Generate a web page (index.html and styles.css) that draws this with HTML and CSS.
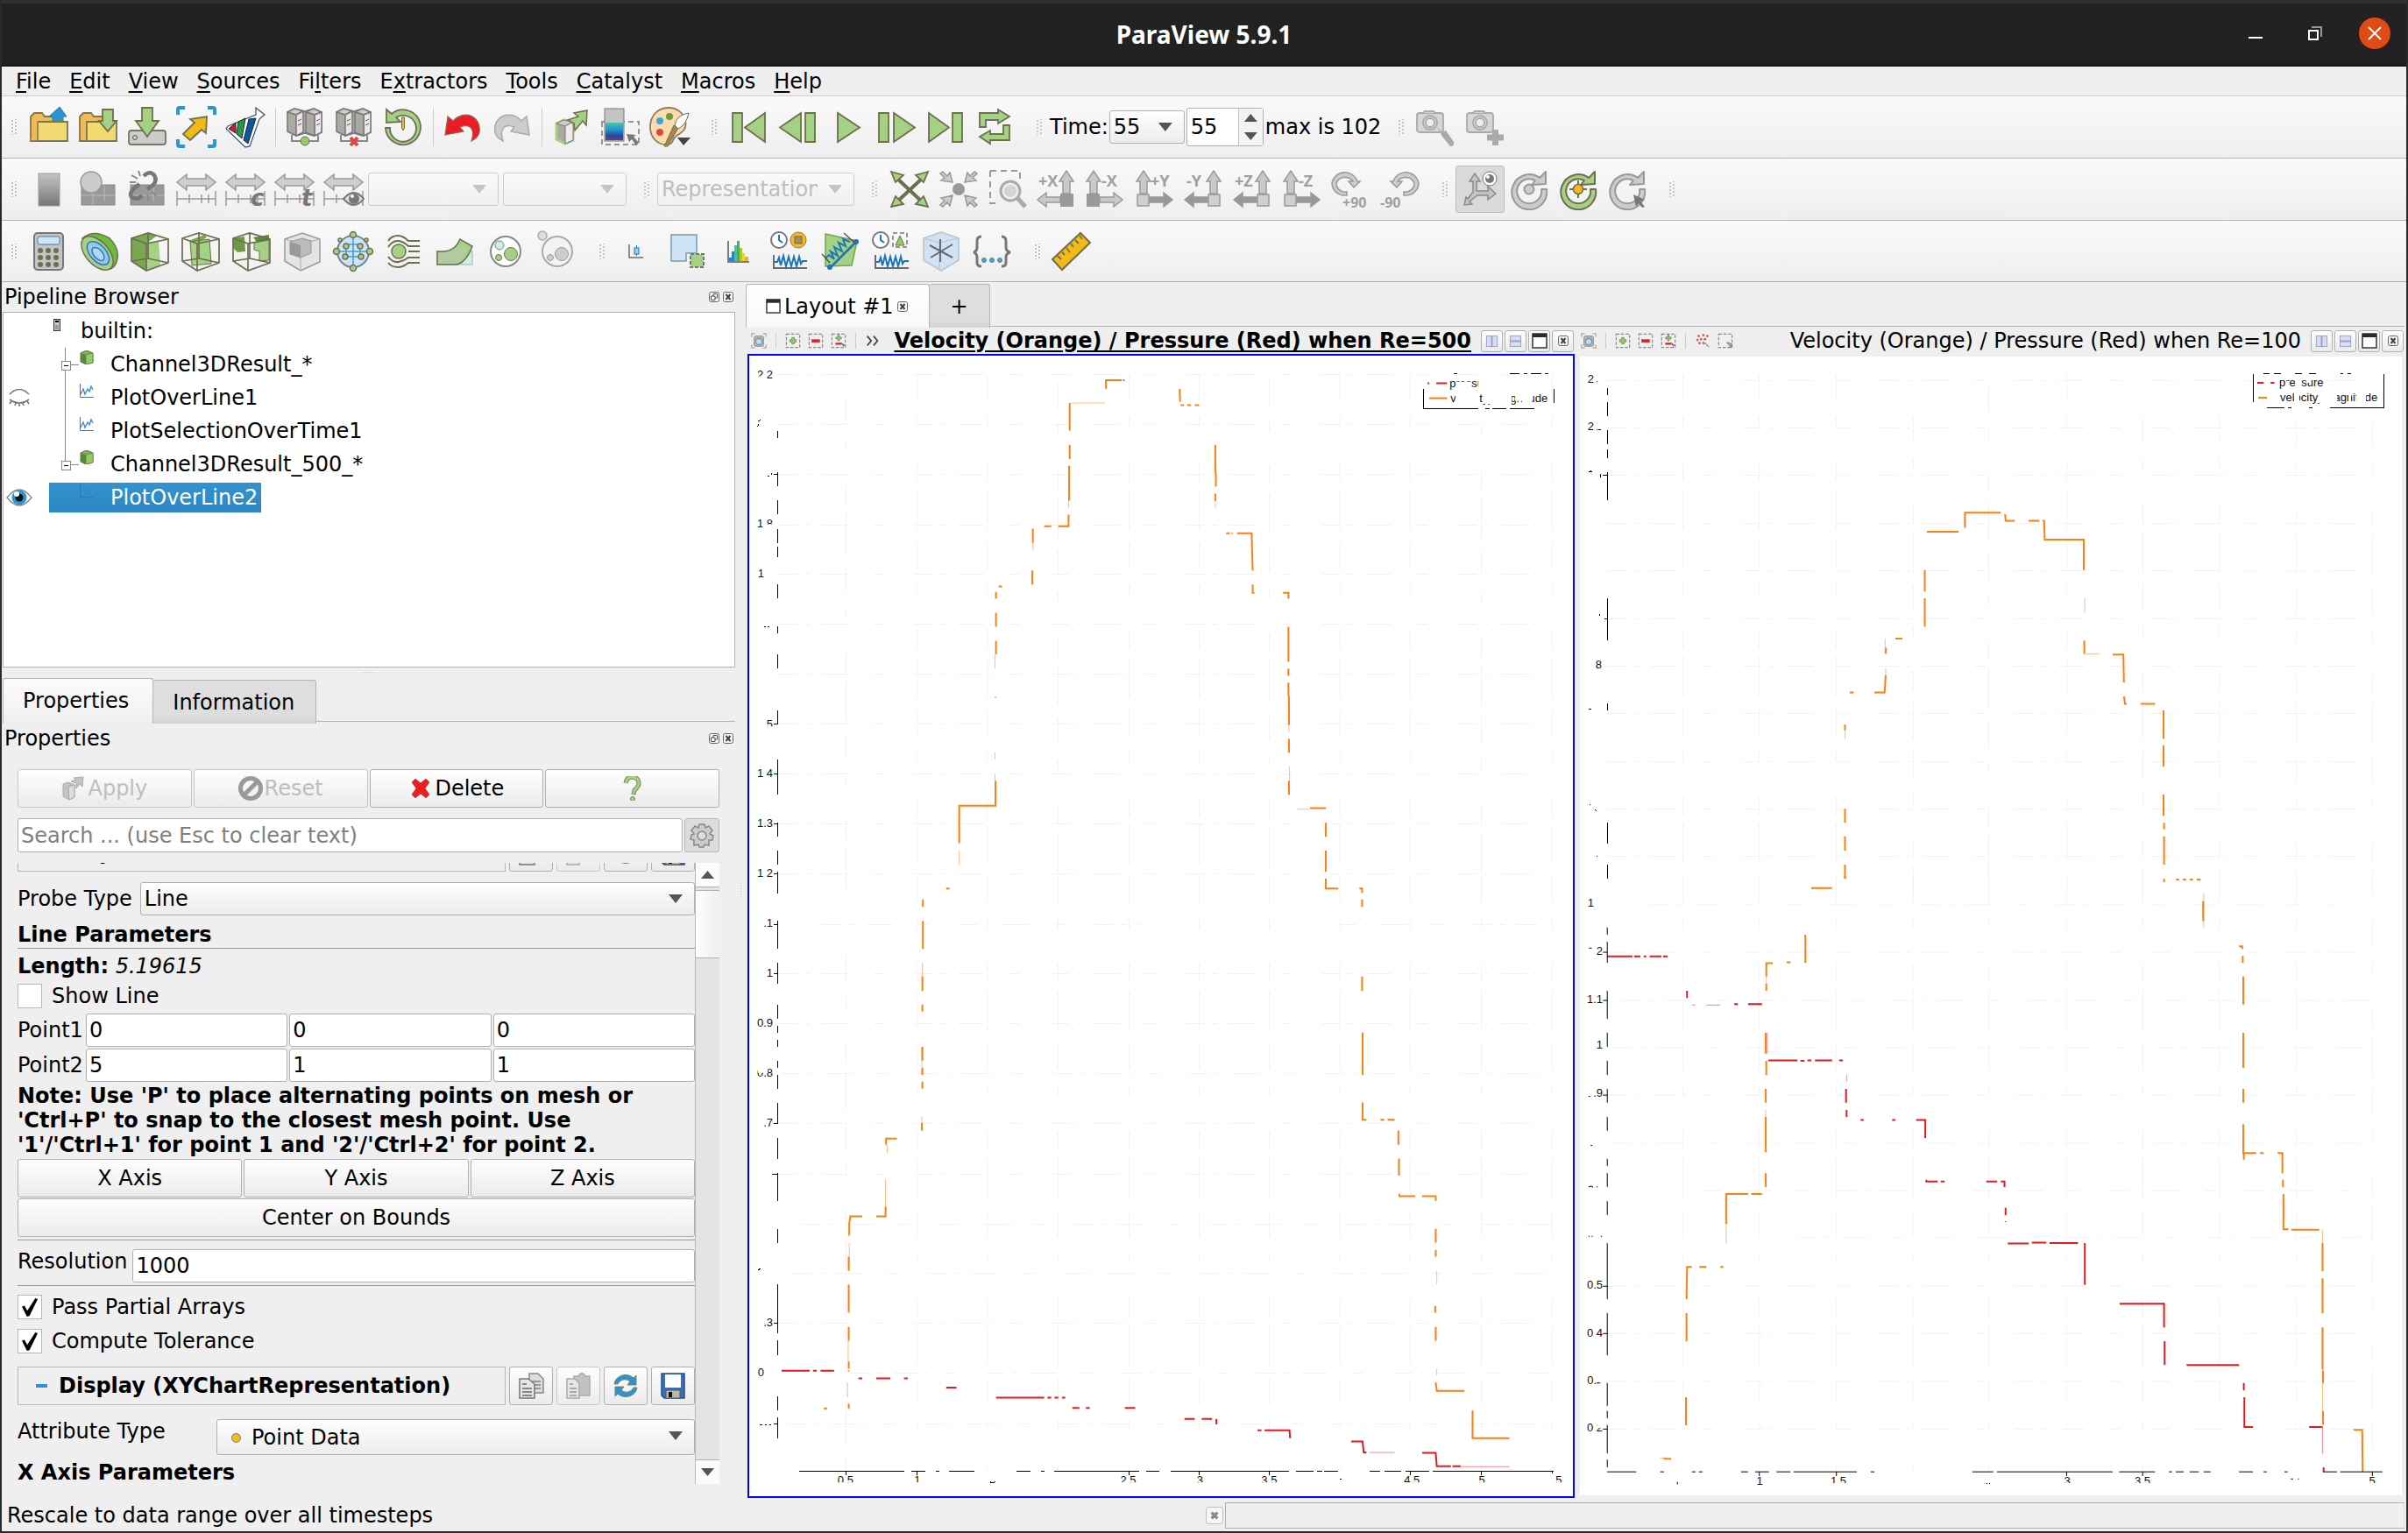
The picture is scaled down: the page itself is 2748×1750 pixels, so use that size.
FILE: index.html
```html
<!DOCTYPE html>
<html lang="en">
<head>
<meta charset="utf-8">
<title>ParaView 5.9.1</title>
<link rel="stylesheet" href="styles.css">
</head>
<body>
<svg class="defs" aria-hidden="true">
  <symbol id="i-float" viewBox="0 0 12 12"><rect x=".5" y=".5" width="11" height="11" rx="2" fill="#f6f6f6" stroke="#666"/><path d="M5 5V2.5H9.500V7H7M2.500 5H7V9.500H2.500Z" fill="none" stroke="#555"/></symbol>
  <symbol id="i-close" viewBox="0 0 12 12"><rect x=".5" y=".5" width="11" height="11" rx="2" fill="#f6f6f6" stroke="#666"/><path d="M3.500 3L8.500 9M8.500 3L3.500 9" stroke="#444" stroke-width="2"/></symbol>
  <symbol id="i-cam" viewBox="0 0 20 20"><path d="M1 5V1H5M15 1H19V5M19 15V19H15M5 19H1V15" fill="none" stroke="#aaa" stroke-width="1.500"/><rect x="4" y="4" width="12" height="13" rx="2" fill="#b4b4b4" stroke="#8a8a8a"/><circle cx="10" cy="11" r="4" fill="#b9dcf5" stroke="#6f8fa5" stroke-width="1.300"/></symbol>
  <symbol id="i-selplus" viewBox="0 0 20 20"><rect x="1.500" y="1.500" width="17" height="17" fill="none" stroke="#8a8a8a" stroke-width="1.300" stroke-dasharray="4 2"/><path d="M8.500 6h3v2.500h2.500v3h-2.500v2.500h-3v-2.500h-2.500v-3h2.500z" fill="#8fce62" stroke="#7a8a65"/></symbol>
  <symbol id="i-selminus" viewBox="0 0 20 20"><rect x="1.500" y="1.500" width="17" height="17" fill="none" stroke="#8a8a8a" stroke-width="1.300" stroke-dasharray="4 2"/><rect x="5" y="8.500" width="10" height="3.500" fill="#ed1c24" stroke="#a33" stroke-width=".5"/></symbol>
  <symbol id="i-seltog" viewBox="0 0 20 20"><rect x="1.500" y="1.500" width="17" height="17" fill="none" stroke="#8a8a8a" stroke-width="1.300" stroke-dasharray="4 2"/><path d="M9 3h2v2.500h2.500v2h-2.500v2.500h-2v-2.500h-2.500v-2h2.500z" fill="#8fce62" stroke="#7a8a65"/><rect x="6" y="12.500" width="8" height="2.500" fill="#ed1c24"/><path d="M13 12l6 4-3 .5 1 3z" fill="#666"/></symbol>
  <symbol id="i-selpts" viewBox="0 0 20 20"><g fill="#c0614d"><circle cx="5" cy="4" r="1.500"/><circle cx="11" cy="3" r="1.500"/><circle cx="3.500" cy="9" r="1.500"/><circle cx="8" cy="8" r="1.500"/><circle cx="13" cy="8" r="1.500"/><circle cx="6" cy="13" r="1.500"/><circle cx="11" cy="13" r="1.500"/><circle cx="16" cy="4" r="1.500"/></g><path d="M13 13l5 5" stroke="#888" stroke-width="2" stroke-dasharray="2 1"/></symbol>
  <symbol id="i-selbox" viewBox="0 0 20 20"><rect x="1.500" y="1.500" width="17" height="17" fill="none" stroke="#8a8a8a" stroke-width="1.300" stroke-dasharray="4 2"/><path d="M12 12l6 2-1 5z" fill="#8fce62" stroke="#777"/></symbol>
  <symbol id="i-splith" viewBox="0 0 16 16"><rect x="1.500" y="1.500" width="13" height="13" fill="#d6ddf5" stroke="#98a2c0"/><path d="M8 1V15" stroke="#98a2c0" stroke-width="2"/></symbol>
  <symbol id="i-splitv" viewBox="0 0 16 16"><rect x="1.500" y="1.500" width="13" height="13" fill="#d6ddf5" stroke="#98a2c0"/><path d="M1 8H15" stroke="#98a2c0" stroke-width="2"/></symbol>
  <symbol id="i-max" viewBox="0 0 18 18"><rect x="1" y="1" width="16" height="16" fill="#fff" stroke="#333" stroke-width="1.500"/><path d="M1 1H17V5H1Z" fill="#2b2b2b"/></symbol>
  <symbol id="i-cube" viewBox="0 0 16 16"><path d="M1 3L8 0L15 3V14L7 16L1 13Z" fill="#7cb356" stroke="#6a6a4a"/><path d="M1 3L7 5V16L1 13Z" fill="#5a8a3c"/><path d="M7 5L15 3V14L7 16Z" fill="#8fce62" stroke="#6a6a4a" stroke-width=".6"/></symbol>
  <symbol id="i-plot" viewBox="0 0 16 16"><path d="M.5 0V15.500H16" fill="none" stroke="#6b6b5a"/><path d="M1 12L4 6L6 12L9 6L11 9L13 3L15 7" fill="none" stroke="#3a86cc" stroke-width="1.300"/></symbol>
  <symbol id="i-servers" viewBox="0 0 48 48"><g stroke="#77777a" stroke-width="1.500" stroke-linejoin="round"><path d="M4 7L12 3L24 6L34 3L43 7V30L34 34L24 31L14 34L4 29Z" fill="#aaaaa0"/><path d="M4 7L12 3L22 6L14 10Z" fill="#ccc"/><path d="M14 10L22 6V30L14 34Z" fill="#e9e2e6"/><path d="M25 7L34 3L43 7L35 10Z" fill="#ccc"/><path d="M35 10L43 7V30L35 34Z" fill="#f1e8ec"/><path d="M25 7L35 10V34L25 30Z" fill="#aaaaa0"/></g><path d="M16 17l4-2M16 22l4-2M37 17l4-2M37 22l4-2" stroke="#555"/><path d="M9 33V40H39V33" fill="none" stroke="#888" stroke-width="2"/></symbol>
  <symbol id="i-range" viewBox="0 0 48 48"><path d="M2 16L13 7V12H35V7L46 16L35 25V20H13V25Z" fill="#cfcfcf" stroke="#999" stroke-width="1.500"/><path d="M2 26V43M46 26V43M2 35H46M16 30V40M30 30V40M38 30V40" stroke="#999" stroke-width="1.500"/></symbol>
  <symbol id="i-up" viewBox="0 0 48 48"><path d="M31 29V15H27L35 3L43 15H39V29Z" fill="#c9c9c9" stroke="#999" stroke-width="1.500"/></symbol>
  <symbol id="i-side" viewBox="0 0 48 48"><path d="M28 33H12V28L2 36L12 44V39H28Z" stroke="#999" stroke-width="1.500"/></symbol>
  <symbol id="i-rot" viewBox="0 0 48 48"><path d="M36 11A20 20 0 1 0 44 24H38A14 14 0 1 1 31 14L27 19L43 18V4Z" stroke-width="2" stroke-linejoin="round"/></symbol>
  <symbol id="i-clock" viewBox="0 0 48 48"><circle cx="13" cy="11" r="9" fill="#fff" stroke="#777" stroke-width="2"/><path d="M13 5V11L17 14" fill="none" stroke="#1b75bb" stroke-width="2"/><path d="M7 28V43H45" fill="none" stroke="#6b6b6b" stroke-width="2"/><path d="M8 36H11L13 31L15 40L18 29L21 41L24 30L27 41L30 30L33 41L36 30L38 38L40 35H45" fill="none" stroke="#1b75bb" stroke-width="2"/></symbol>
  <symbol id="i-wire" viewBox="0 0 48 48"><path d="M3 9L22 3L45 10V37L20 46L3 35ZM3 9L20 15L45 10M20 15V46M22 3V32L3 35M22 32L45 37" fill="none" stroke="#6e6e50" stroke-width="1.700"/></symbol>
  <symbol id="i-page" viewBox="0 0 34 34"><path d="M15 3H25L31 9V25H15Z" fill="#ddd" stroke="#888" stroke-width="1.500"/><path d="M18 12H28M18 16H28M18 20H28" stroke="#999" stroke-width="2"/><path d="M4 9H14L21 15V31H4Z" fill="#e6e6e6" stroke="#777" stroke-width="1.500"/><path d="M7 15H12M7 20H18M7 24H18M7 28H18" stroke="#888" stroke-width="2"/></symbol>
  <symbol id="i-paste" viewBox="0 0 34 34"><path d="M12 6H17Q21 -1 25 6H30V28H12Z" fill="#c2c2c2" stroke="#aaa" stroke-width="1.500"/><path d="M4 9H13L18 14V31H4Z" fill="#e6e6e6" stroke="#aaa" stroke-width="1.500"/><path d="M7 15H11M7 20H15M7 24H15M7 28H15" stroke="#aaa" stroke-width="2"/></symbol>
  <symbol id="i-reload" viewBox="0 0 34 34"><path d="M4 15A13 12 0 0 1 26 8L29 5V16H19L22 12A9 9 0 0 0 8 15Z" fill="#2a95d3" stroke="#8a7d60"/><path d="M30 19A13 12 0 0 1 8 26L5 29V18H15L12 22A9 9 0 0 0 26 19Z" fill="#2a95d3" stroke="#8a7d60"/></symbol>
  <symbol id="i-save" viewBox="0 0 34 34"><path d="M4 3H30V31H7L4 28Z" fill="#3a70b8" stroke="#24508c" stroke-width="1.500"/><rect x="8" y="4" width="18" height="15" fill="#fff"/><rect x="9" y="22" width="16" height="9" fill="#b9b9a8" stroke="#555"/><rect x="12" y="24" width="4" height="6" fill="#111"/></symbol>
</svg>

<div class="app">
<header class="titlebar">
  <h1>ParaView 5.9.1</h1>
  <div class="winbtns">
    <button aria-label="Minimize"><svg viewBox="0 0 16 16"><path d="M0 13H16" stroke="#fff" stroke-width="2"/></svg></button>
    <button aria-label="Restore"><svg viewBox="0 0 16 16"><rect x="1" y="5" width="10" height="10" fill="none" stroke="#fff" stroke-width="2"/><path d="M4 1H15V12" fill="none" stroke="#999" stroke-width="2"/></svg></button>
    <button class="x" aria-label="Close"><svg viewBox="0 0 16 16"><path d="M1 1L15 15M15 1L1 15" stroke="#fff" stroke-width="2"/></svg></button>
  </div>
</header>

<nav class="menubar">
  <a href="#"><u>F</u>ile</a><a href="#"><u>E</u>dit</a><a href="#"><u>V</u>iew</a><a href="#"><u>S</u>ources</a><a href="#">Fi<u>l</u>ters</a><a href="#">E<u>x</u>tractors</a><a href="#"><u>T</u>ools</a><a href="#"><u>C</u>atalyst</a><a href="#"><u>M</u>acros</a><a href="#"><u>H</u>elp</a>
</nav>

<div class="toolbar">
  <div class="group"><i class="grip"></i>
    <button aria-label="Open"><svg viewBox="0 0 48 48"><path d="M3 40V12L7 8H16L19 12H30V40Z" fill="#f0b95a" stroke="#7d7650" stroke-width="1.800"/><path d="M28 20V12H24L36 1L44 12H40V20Z" fill="#2a95d3" stroke="#33759c"/><path d="M11 18H45V40H3" fill="#f3da70" stroke="#7d7650" stroke-width="1.800"/><path d="M3 40H11V18" fill="#f0b95a" stroke="#7d7650" stroke-width="1.500"/></svg></button>
    <button aria-label="Load state"><svg viewBox="0 0 48 48"><path d="M3 40V12L7 8H16L19 12H30V40Z" fill="#f0b95a" stroke="#7d7650" stroke-width="1.800"/><path d="M11 18H45V40H3H11Z" fill="#f3da70" stroke="#7d7650" stroke-width="1.800"/><path d="M29 4H41V17H45L35 29L25 17H29Z" fill="#a5d185" stroke="#6e6e50" stroke-width="1.800"/></svg></button>
    <button aria-label="Save state"><svg viewBox="0 0 48 48"><rect x="3" y="28" width="42" height="16" rx="3" fill="#ccc" stroke="#77775f" stroke-width="1.800"/><circle cx="10" cy="36" r="2.500" fill="none" stroke="#555"/><path d="M18 2H30V17H37L24 35L11 17H18Z" fill="#a5d185" stroke="#6e6e50" stroke-width="1.800"/></svg></button>
    <button aria-label="Save data"><svg viewBox="0 0 48 48"><path d="M3 10V4Q3 2 5 2H11M37 2H43Q45 2 45 4V10M45 38V44Q45 46 43 46H37M11 46H5Q3 46 3 44V38" fill="none" stroke="#2a95d3" stroke-width="4"/><path d="M36 12L35 31L30 27L17 39L9 32L22 19L17 15Z" fill="#f3ba14" stroke="#6e6e50" stroke-width="1.800"/></svg></button>
    <button aria-label="Catalyst"><svg viewBox="0 0 48 48"><path d="M36 2L46 10L42 13L40 15L29 46L24 47L2 26L4 23L36 10Z" fill="#fff" stroke="#3d5a70" stroke-width="1.300"/><path d="M5 26L13 19V31Z" fill="#c8202c" stroke="#222"/><path d="M16 18L24 14L20 37L14 32Z" fill="#229a48" stroke="#222"/><path d="M28 15L36 14L27 43L22 39Z" fill="#0b58a2" stroke="#222"/></svg></button>
    <i class="sep"></i>
    <button aria-label="Connect"><svg viewBox="0 0 48 48"><use href="#i-servers"/><circle cx="24" cy="40" r="5" fill="#8fce62" stroke="#6e6e50"/></svg></button>
    <button aria-label="Disconnect"><svg viewBox="0 0 48 48"><use href="#i-servers"/><path d="M20 36L28 45M28 36L20 45" stroke="#e0483e" stroke-width="4"/></svg></button>
    <button aria-label="Reset session"><svg viewBox="0 0 48 48"><path d="M11 9A20 20 0 1 1 4 25H9A15 15 0 1 0 16 13L21 18L5 19V4Z" fill="#a5d185" stroke="#6e6e50" stroke-width="1.800"/><path d="M22.500 13H25.500V25L24 28L22.500 25Z" fill="#f3ba14" stroke="#6e6e50"/></svg></button>
    <i class="sep"></i>
    <button aria-label="Undo"><svg viewBox="0 0 48 48"><path d="M4 33L7 12L13 17C26 3 46 12 43 30Q42 36 34 40C38 28 34 19 21 24L25 29Z" fill="#ed1c24" stroke="#8a6a5a" stroke-width="1.200"/></svg></button>
    <button aria-label="Redo"><svg viewBox="0 0 48 48"><path d="M44 33L41 12L35 17C22 3 2 12 5 30Q6 36 14 40C10 28 14 19 27 24L23 29Z" fill="#ccc" stroke="#aaa" stroke-width="1.500"/></svg></button>
    <i class="sep"></i>
    <button aria-label="Find data"><svg viewBox="0 0 48 48"><path d="M7 20L15 16L26 18V39L17 43L7 38Z" fill="#aaa99c" stroke="#a5d185" stroke-width="3"/><path d="M7 20L15 16L26 18L17 23Z" fill="#ccc" stroke="#777"/><path d="M17 23L26 18V39L17 43Z" fill="#f1e8ec" stroke="#777"/><path d="M20 16L32 12L27 8L42 5L41 22L37 17L28 28L27 20Z" fill="#a5d185" stroke="#6e6e50" stroke-width="1.500"/></svg></button>
    <button aria-label="Color selection"><svg viewBox="0 0 48 48"><defs><linearGradient id="cm" x2="0" y2="1"><stop offset="0" stop-color="#4fc3a0"/><stop offset=".4" stop-color="#2196d3"/><stop offset=".75" stop-color="#234a9a"/><stop offset="1" stop-color="#6a3a9a"/></linearGradient></defs><path d="M3 18H45V44H3Z" fill="none" stroke="#777" stroke-width="1.500" stroke-dasharray="6 4"/><rect x="6" y="3" width="22" height="37" fill="#c4c4c4" stroke="#777"/><rect x="7" y="19" width="20" height="20" fill="url(#cm)"/><path d="M31 32L42 33L39 35L45 42L42 45L37 38L34 41Z" fill="#777"/></svg></button>
    <button aria-label="Palette"><svg viewBox="0 0 48 48"><path d="M23 2C8 2 2 14 2 24C2 36 10 44 20 44C30 44 26 38 32 34C40 29 44 26 42 17C40 8 33 2 23 2Z" fill="#fbdcae" stroke="#8a7d60" stroke-width="1.800"/><circle cx="13" cy="17" r="4" fill="#35a8dc"/><circle cx="24" cy="12" r="4" fill="#6f9b3f"/><circle cx="13" cy="30" r="4" fill="#e0483e"/><path d="M18 46L29 22L34 25L22 46Z" fill="#a8854d" stroke="#6e6e50"/><path d="M30 22Q32 10 46 8Q43 22 34 26Z" fill="#fff" stroke="#6e6e50"/><path d="M33 36H48L40 45Z" fill="#444"/></svg></button>
  </div>
  <div class="group play"><i class="grip"></i>
    <button aria-label="First frame"><svg viewBox="0 0 48 48"><g class="go"><path d="M5 8H16V41H5ZM42 8V41L19 24.500Z"/></g></svg></button>
    <button aria-label="Previous frame"><svg viewBox="0 0 48 48"><g class="go"><path d="M27 8V41L3 24.500ZM32 8H43V41H32Z"/></g></svg></button>
    <button aria-label="Play"><svg viewBox="0 0 48 48"><g class="go"><path d="M13 8V41L38 24.500Z"/></g></svg></button>
    <button aria-label="Next frame"><svg viewBox="0 0 48 48"><g class="go"><path d="M4 8H15V41H4ZM21 8V41L45 24.500Z"/></g></svg></button>
    <button aria-label="Last frame"><svg viewBox="0 0 48 48"><g class="go"><path d="M5 8V41L28 24.500ZM32 8H43V41H32Z"/></g></svg></button>
    <button aria-label="Loop"><svg viewBox="0 0 48 48"><g class="go"><path d="M7 8H28V4L41 12L28 20V16H14V24H7ZM41 39H19V43L7 35L19 28V32H34V22H41Z"/></g></svg></button>
  </div>
  <div class="group time"><i class="grip"></i>
    <label for="tsel">Time:</label>
    <span class="combo t"><select id="tsel"><option>55</option></select></span>
    <span class="spin"><input id="tnum" value="55" aria-label="Time index"><span class="arrows"><button aria-label="Up"></button><button class="dn" aria-label="Down"></button></span></span>
    <label for="tnum">max is 102</label>
  </div>
  <div class="group"><i class="grip"></i>
    <button aria-label="Camera settings" disabled><svg viewBox="0 0 48 48"><g fill="#d6d6d6" stroke="#aaa" stroke-width="1.800"><rect x="2" y="8" width="30" height="22" rx="3"/><path d="M9 8L11 6H21L23 8"/><circle cx="17" cy="19" r="8"/><circle cx="17" cy="19" r="5" fill="#eee"/></g><path d="M25 24L30 30L35 28L44 41Q45 46 40 46L31 35Z" fill="#aaa"/></svg></button>
    <button aria-label="Add camera" disabled><svg viewBox="0 0 48 48"><g fill="#d6d6d6" stroke="#aaa" stroke-width="1.800"><rect x="3" y="8" width="30" height="22" rx="3"/><path d="M10 8L12 6H22L24 8"/><circle cx="18" cy="19" r="8"/><circle cx="18" cy="19" r="5" fill="#eee"/></g><path d="M26 36H45M35.500 27V45" stroke="#aaa" stroke-width="7"/></svg></button>
  </div>
</div>

<div class="toolbar">
  <div class="group"><i class="grip"></i>
    <button aria-label="Color legend" disabled><svg viewBox="0 0 48 48"><defs><linearGradient id="gg" x2="0" y2="1"><stop offset="0" stop-color="#c4c4c4"/><stop offset="1" stop-color="#777"/></linearGradient></defs><rect x="12" y="6" width="24" height="37" fill="url(#gg)" stroke="#999"/></svg></button>
    <button aria-label="Edit color map" disabled><svg viewBox="0 0 48 48"><rect x="5" y="19" width="38" height="23" fill="#999" stroke="#888"/><path d="M5 31H43M31 19V38M18 19V42" stroke="#bbb"/><circle cx="16" cy="16" r="12" fill="#ccc" stroke="#999" stroke-width="1.500"/></svg></button>
    <button aria-label="Separate color map" disabled><svg viewBox="0 0 48 48"><rect x="5" y="19" width="38" height="23" fill="#999" stroke="#888"/><path d="M5 31H43M31 19V38" stroke="#bbb"/><path d="M20 9Q27 2 32 8Q36 14 30 20L24 24M15 18L8 24Q2 31 8 34Q14 36 18 31" fill="none" stroke="#777" stroke-width="4.500"/><path d="M6 8L13 12M14 3L16 9M4 16H11M24 30L26 37M29 27L35 32" stroke="#888" stroke-width="2"/></svg></button>
    <button aria-label="Rescale to data range" disabled><svg><use href="#i-range"/></svg></button>
    <button aria-label="Rescale to custom range" disabled><svg viewBox="0 0 48 48"><use href="#i-range"/><text class="sub" x="30" y="43">c</text></svg></button>
    <button aria-label="Rescale over all timesteps" disabled><svg viewBox="0 0 48 48"><use href="#i-range"/><text class="sub" x="32" y="43">t</text></svg></button>
    <button aria-label="Rescale to visible range" disabled><svg viewBox="0 0 48 48"><use href="#i-range"/><path d="M24 35Q36 21 47 35Q36 49 24 35Z" fill="#ddd" stroke="#777" stroke-width="2"/><circle cx="36" cy="35" r="6" fill="#777"/><circle cx="34" cy="32" r="2" fill="#fff"/></svg></button>
    <span class="combo c1 off"><select disabled aria-label="Color array"><option></option></select></span>
    <span class="combo c2 off"><select disabled aria-label="Component"><option></option></select></span>
  </div>
  <div class="group"><i class="grip"></i>
    <span class="combo c3 off"><select disabled aria-label="Representation"><option>Representation</option></select></span>
  </div>
  <div class="group"><i class="grip"></i>
    <button aria-label="Reset camera"><svg viewBox="0 0 48 48"><path d="M8 10L40 40M40 10L8 40" stroke="#6e6e50" stroke-width="4"/><g class="go"><path d="M3 4L17 8L8 16ZM45 4L31 8L40 16ZM3 44L8 32L17 41ZM45 44L40 32L31 41Z"/></g></svg></button>
    <button aria-label="Zoom to data" disabled><svg viewBox="0 0 48 48"><circle cx="24" cy="24" r="7" fill="#999"/><path d="M17 16L4 14L8 11L3 6L6 4L11 9L14 5ZM31 16L44 14L40 11L45 6L42 4L37 9L34 5ZM17 31L4 34L8 37L3 42L6 44L11 39L14 43ZM31 31L44 34L40 37L45 42L42 44L37 39L34 43Z" fill="#ccc" stroke="#999" stroke-width="1.500"/></svg></button>
    <button aria-label="Zoom to box" disabled><svg viewBox="0 0 48 48"><path d="M4 3H38V14M4 3V40H14" fill="none" stroke="#999" stroke-width="2" stroke-dasharray="7 5"/><circle cx="27" cy="26" r="11" fill="#eee" stroke="#aaa" stroke-width="3"/><circle cx="27" cy="26" r="7" fill="#d4d4d4"/><path d="M35 34L44 44" stroke="#aaa" stroke-width="5"/></svg></button>
    <button aria-label="+X view" disabled><svg viewBox="0 0 48 48" fill="#c9c9c9"><use href="#i-up"/><use href="#i-side"/><rect x="28" y="29" width="15" height="15" fill="#999"/><text class="ax" x="3" y="21">+X</text></svg></button>
    <button aria-label="-X view" disabled><svg viewBox="0 0 48 48" fill="#c9c9c9"><g transform="matrix(-1 0 0 1 45 0)"><use href="#i-up"/><use href="#i-side"/></g><rect x="2" y="29" width="15" height="15" fill="#999"/><text class="ax" x="19" y="21">-X</text></svg></button>
    <button aria-label="+Y view" disabled><svg viewBox="0 0 48 48" fill="#999"><g transform="matrix(-1 0 0 1 46 0)"><use href="#i-up"/><use href="#i-side"/></g><rect x="4" y="30" width="13" height="13" fill="#d0d0d0" stroke="#999" stroke-width="1.500"/><text class="ax" x="19" y="21">+Y</text></svg></button>
    <button aria-label="-Y view" disabled><svg viewBox="0 0 48 48" fill="#999"><use href="#i-up"/><use href="#i-side"/><rect x="29" y="30" width="13" height="13" fill="#d0d0d0" stroke="#999" stroke-width="1.500"/><text class="ax" x="4" y="21">-Y</text></svg></button>
    <button aria-label="+Z view" disabled><svg viewBox="0 0 48 48" fill="#999"><use href="#i-up"/><use href="#i-side"/><rect x="29" y="30" width="13" height="13" fill="#d0d0d0" stroke="#999" stroke-width="1.500"/><text class="ax" x="3" y="21">+Z</text></svg></button>
    <button aria-label="-Z view" disabled><svg viewBox="0 0 48 48" fill="#999"><g transform="matrix(-1 0 0 1 46 0)"><use href="#i-up"/><use href="#i-side"/></g><rect x="4" y="30" width="13" height="13" fill="#d0d0d0" stroke="#999" stroke-width="1.500"/><text class="ax" x="20" y="21">-Z</text></svg></button>
    <button aria-label="Rotate +90" disabled><svg viewBox="0 0 48 48"><path d="M19 27V31C8 32 2 24 2 17A15 15 0 0 1 31 15H34L27 22L21 15H26A11 11 0 0 0 7 17C7 23 12 28 19 27Z" fill="#ccc" stroke="#999" stroke-width="1.500"/><text class="ax sm" x="14" y="45">+90</text></svg></button>
    <button aria-label="Rotate -90" disabled><svg viewBox="0 0 48 48"><path d="M28 27V31C39 32 45 24 45 17A15 15 0 0 0 16 15H13L20 22L26 15H21A11 11 0 0 1 40 17C40 23 35 28 28 27Z" fill="#ccc" stroke="#999" stroke-width="1.500"/><text class="ax sm" x="1" y="45">-90</text></svg></button>
  </div>
  <div class="group"><i class="grip"></i>
    <button class="down" aria-label="Orientation axes"><svg viewBox="0 0 48 48"><g fill="#c4c4c4" stroke="#8a8a8a" stroke-width="1.500"><path d="M16 27V15H12L18 6L24 15H20V26H33V21L42 29L33 36V31H21L12 38L15 41L6 42L8 33L10 35Z"/></g><circle cx="35" cy="12" r="8" fill="#fff" stroke="#777"/><circle cx="35" cy="12" r="5" fill="#777"/><circle cx="33" cy="10" r="2" fill="#fff"/></svg></button>
    <button aria-label="Show center" disabled><svg viewBox="0 0 48 48" fill="#ccc" stroke="#999"><use href="#i-rot"/><circle cx="24" cy="24" r="5.500" stroke-width="2"/></svg></button>
    <button aria-label="Reset center"><svg viewBox="0 0 48 48" fill="#a5d185" stroke="#6e6e50"><use href="#i-rot"/><path d="M24 14V34M14 24H34" stroke-width="2"/><circle cx="24" cy="24" r="5.500" fill="#fbb917" stroke-width="1.500"/></svg></button>
    <button aria-label="Pick center" disabled><svg viewBox="0 0 48 48" fill="#ccc" stroke="#999"><use href="#i-rot"/><path d="M31 30L44 36L39 38L44 44L41 45L37 40L34 44Z" fill="#777" stroke="none"/></svg></button>
  </div>
  <div class="group"><i class="grip"></i></div>
</div>

<div class="toolbar filters">
  <div class="group"><i class="grip"></i>
    <button aria-label="Calculator"><svg viewBox="0 0 48 48"><rect x="8" y="3" width="33" height="42" rx="4" fill="#c4c4c4" stroke="#777" stroke-width="2"/><rect x="12" y="7" width="25" height="9" rx="2" fill="#cfe5f7" stroke="#4a7db0"/><g fill="#6e6e50"><circle cx="15" cy="23" r="3"/><circle cx="24" cy="23" r="3"/><circle cx="33" cy="23" r="3"/><circle cx="15" cy="31" r="3"/><circle cx="24" cy="31" r="3"/><circle cx="33" cy="31" r="3"/><circle cx="15" cy="39" r="3"/><circle cx="24" cy="39" r="3"/><circle cx="33" cy="39" r="3"/></g></svg></button>
    <button aria-label="Contour"><svg viewBox="0 0 48 48"><g stroke="#6e6e50" stroke-width="1.500"><path d="M5 9Q18 -2 36 9Q49 22 44 36Q42 42 37 44Z" fill="#6cbb3c"/><ellipse cx="22" cy="26" rx="13" ry="23" transform="rotate(-42 22 26)" fill="#a5d185"/><ellipse cx="23" cy="26" rx="9" ry="16" transform="rotate(-42 23 26)" fill="#9cc8e8" stroke="#2a77b8"/><ellipse cx="23" cy="27" rx="5" ry="9" transform="rotate(-42 23 27)" fill="#b4d6ee" stroke="#2a77b8"/></g></svg></button>
    <button aria-label="Clip"><svg viewBox="0 0 48 48"><path d="M3 9L22 3L32 6L20 15V46L3 35Z" fill="#7aa850"/><path d="M20 15L34 12L36 40L20 46Z" fill="#a5d185"/><use href="#i-wire"/></svg></button>
    <button aria-label="Slice"><svg viewBox="0 0 48 48"><path d="M10 12L28 5L31 8L20 15Z" fill="#7aa850"/><path d="M12 13L34 10L36 38L14 40Z" fill="#a5d185" stroke="#6e6e50"/><use href="#i-wire"/></svg></button>
    <button aria-label="Threshold"><svg viewBox="0 0 48 48"><path d="M3 9L16 7L17 24L8 25L3 20Z" fill="#6a9a42"/><path d="M26 8L44 5V10L30 13Z" fill="#5a8a3c"/><path d="M27 14L44 11V34L33 35V24L27 22Z" fill="#a5d185" stroke="#6e6e50"/><use href="#i-wire"/></svg></button>
    <button aria-label="Extract subset" disabled><svg viewBox="0 0 48 48"><path d="M4 10L24 3L44 10V36L22 46L4 35Z" fill="#e4e4e4" stroke="#999" stroke-width="1.500"/><path d="M4 10L22 15L44 10M22 15V46" fill="none" stroke="#aaa"/><path d="M10 13L24 9L34 12V26L22 31L10 27Z" fill="#bbb" stroke="#999"/><path d="M10 13L22 17V31L10 27Z" fill="#999"/></svg></button>
    <button aria-label="Glyph"><svg viewBox="0 0 48 48"><circle cx="24" cy="24" r="18" fill="#cfe5f7" stroke="#6e8a9a" stroke-width="2"/><path d="M6 24H42M24 5V43M16 16H32V30H16Z" fill="none" stroke="#4a9ad0" stroke-width="1.500"/><g fill="#a5d185" stroke="#6e6e50" stroke-width="1.500"><circle cx="24" cy="5" r="3.500"/><circle cx="24" cy="43" r="3.500"/><circle cx="5" cy="24" r="3.500"/><circle cx="43" cy="24" r="3.500"/><circle cx="16" cy="18" r="3"/><circle cx="32" cy="18" r="3"/><circle cx="15" cy="30" r="3"/><circle cx="33" cy="30" r="3"/><circle cx="9" cy="11" r="2"/><circle cx="39" cy="11" r="2"/></g></svg></button>
    <button aria-label="Stream tracer"><svg viewBox="0 0 48 48"><path d="M6 12Q10 6 17 6Q23 6 29 12H42M6 19Q11 11 18 12Q24 13 29 18H42M6 37Q10 42 17 42Q23 42 29 37H42M6 30Q11 37 18 36Q24 35 29 31H42M29 24H42" fill="none" stroke="#6e6e50" stroke-width="2"/><circle cx="18" cy="24" r="8" fill="#a5d185" stroke="#6e6e50" stroke-width="1.500"/></svg></button>
    <button aria-label="Warp by vector"><svg viewBox="0 0 48 48"><rect x="4" y="24" width="40" height="15" fill="#d3ece6" stroke="#8ac0b0"/><path d="M4 24Q24 26 30 10L44 18Q36 39 24 39H4Z" fill="#a5d185" stroke="#6e6e50" stroke-width="1.500"/><path d="M5 25Q20 26 26 20H38Q34 38 20 38H5Z" fill="#b3cba0"/></svg></button>
    <button aria-label="Group datasets"><svg viewBox="0 0 48 48"><circle cx="24" cy="24" r="17" fill="#fff" stroke="#888" stroke-width="2"/><circle cx="17" cy="17" r="5" fill="#d3ece6" stroke="#6e8a80"/><circle cx="30" cy="27" r="7.500" fill="#a5d185" stroke="#6e6e50"/><circle cx="16" cy="31" r="3.500" fill="#a5d185" stroke="#6e6e50"/></svg></button>
    <button aria-label="Extract level" disabled><svg viewBox="0 0 48 48"><circle cx="8" cy="6" r="5" fill="#ddd" stroke="#aaa" stroke-width="1.500"/><circle cx="25" cy="24" r="17" fill="#f3f3f3" stroke="#aaa" stroke-width="2"/><circle cx="30" cy="27" r="7.500" fill="#ccc" stroke="#999"/><circle cx="17" cy="31" r="3.500" fill="#ccc" stroke="#999"/></svg></button>
  </div>
  <div class="group"><i class="grip"></i>
    <button aria-label="Box plot"><svg viewBox="0 0 48 48"><path d="M16 16V31H32" fill="none" stroke="#6e6e6e" stroke-width="1.500"/><path d="M24.500 17V29" stroke="#1b75bb"/><rect x="22" y="20" width="5" height="7" fill="#9cd0f0" stroke="#1b75bb"/></svg></button>
    <button aria-label="Extract block"><svg viewBox="0 0 48 48"><path d="M6 5H35V26H23V35H6Z" fill="#cfe5f7" stroke="#7c9aaa" stroke-width="1.500"/><rect x="28" y="27" width="15" height="15" fill="#a5d185" stroke="#777" stroke-width="2" stroke-dasharray="4 2"/></svg></button>
    <button aria-label="Histogram"><svg viewBox="0 0 48 48"><path d="M13 12V36H37" fill="none" stroke="#555" stroke-width="1.500"/><path d="M14 31H17V35H14ZM17 24H20V35H17Z" fill="#0a8af0"/><path d="M20 17H23V35H20Z" fill="#58b8a0"/><path d="M23 12H26V35H23Z" fill="#4caf50"/><path d="M26 20H29V35H26Z" fill="#a8d020"/><path d="M29 26H32V35H29Z" fill="#ffd400"/><path d="M32 30H36V35H32Z" fill="#ffaa10"/></svg></button>
    <button aria-label="Plot data over time"><svg viewBox="0 0 48 48"><use href="#i-clock"/><circle cx="35" cy="11" r="9" fill="#fbb917" stroke="#777"/><rect x="31" y="7" width="8" height="8" fill="#a09060" stroke="#6e6e50"/></svg></button>
    <button aria-label="Plot over line"><svg viewBox="0 0 48 48"><path d="M8 4L44 12L38 40L8 41Z" fill="#a5d185" stroke="#6aa84a" stroke-width="1.500"/><path d="M13 43L43 13" stroke="#1b75bb" stroke-width="2.500"/><circle cx="43" cy="13" r="3" fill="#1b75bb"/><circle cx="13" cy="42" r="3" fill="#1b75bb"/><path d="M8 32L12 28L18 33L14 24L22 29L18 19L27 24L23 14L31 18L28 10L36 13" fill="none" stroke="#1b75bb" stroke-width="2"/><path d="M4 27L13 37M29 3L41 14" stroke="#555" stroke-width="1.500"/></svg></button>
    <button aria-label="Plot selection over time"><svg viewBox="0 0 48 48"><use href="#i-clock"/><rect x="27" y="3" width="16" height="16" fill="none" stroke="#777" stroke-width="1.500" stroke-dasharray="5 3"/><path d="M35 6L40 17H30Z" fill="#8fce62" stroke="#6e6e50"/></svg></button>
    <button aria-label="Probe location"><svg viewBox="0 0 48 48"><path d="M4 9L24 2L44 9V34L24 46L4 34Z" fill="#cfe3f5" stroke="#bcc8d0" stroke-width="1.800"/><path d="M4 9L22 14L44 9M22 14V46" fill="none" stroke="#c0ccd4" stroke-width="1.500"/><path d="M23 10V36M11 17L37 31M37 16L12 31" stroke="#6b6b6b" stroke-width="2"/></svg></button>
    <button aria-label="Programmable filter"><svg viewBox="0 0 48 48"><path d="M12 7Q7 7 7 12V19Q7 24 3 25Q7 26 7 31V37Q7 41 12 41M35 7Q40 7 40 12V19Q40 24 45 25Q40 26 40 31V37Q40 41 35 41" fill="none" stroke="#777" stroke-width="3"/><g fill="#4aa8d8" stroke="#5a7a8a"><circle cx="15" cy="34" r="2.500"/><circle cx="24" cy="34" r="2.500"/><circle cx="33" cy="34" r="2.500"/></g></svg></button>
  </div>
  <div class="group"><i class="grip"></i>
    <button aria-label="Ruler"><svg viewBox="0 0 48 48"><path d="M2 33L34 3L45 14L13 45Z" fill="#f3ba14" stroke="#6e6e50" stroke-width="2"/><path d="M8 29L12 33M13 25L16 28M18 20L22 25M23 15L26 19M28 11L32 15M33 6L36 10" stroke="#6e6e50" stroke-width="1.800"/></svg></button>
  </div>
</div>

<main class="work">
  <aside class="dock">
    <div class="docktitle"><h2>Pipeline Browser</h2><button aria-label="Float"><svg><use href="#i-float"/></svg></button><button aria-label="Close"><svg><use href="#i-close"/></svg></button></div>
    <ul class="tree">
      <li class="root"><span class="eye"></span><span class="row"><svg class="srv" viewBox="0 0 8 14"><rect x=".5" y=".5" width="7" height="13" fill="#ccc" stroke="#333"/><path d="M2 3H6" stroke="#000" stroke-width="2"/><rect x="2" y="7" width="4" height="5" fill="#999"/></svg><span>builtin:</span></span></li>
      <li><span class="eye"></span><span class="branch first"></span><span class="row"><svg><use href="#i-cube"/></svg><span>Channel3DResult_*</span></span></li>
      <li class="leaf"><span class="eye"><svg viewBox="0 0 24 20"><path d="M1 6Q12 -5 23 6M1 12Q12 20 23 12M3 14L1 17M8 16L7 19M12 17V20M16 16L17 19M21 14L23 17" fill="none" stroke="#777" stroke-width="1.600"/></svg></span><span class="branch line"></span><span class="row"><svg><use href="#i-plot"/></svg><span>PlotOverLine1</span></span></li>
      <li class="leaf"><span class="eye"></span><span class="branch line"></span><span class="row"><svg><use href="#i-plot"/></svg><span>PlotSelectionOverTime1</span></span></li>
      <li><span class="eye"></span><span class="branch last"></span><span class="row"><svg><use href="#i-cube"/></svg><span>Channel3DResult_500_*</span></span></li>
      <li class="leaf sel"><span class="eye"><svg viewBox="0 0 30 20"><path d="M1 10Q15 -8 29 10Q15 28 1 10Z" fill="#fff" stroke="#888" stroke-width="1.300"/><circle cx="15" cy="10" r="8.500" fill="#2a95d3"/><circle cx="15" cy="10" r="4.500" fill="#111"/><circle cx="12" cy="6" r="3" fill="#fff"/></svg></span><span class="branch"></span><span class="row"><svg><use href="#i-plot"/></svg><span>PlotOverLine2</span></span></li>
    </ul>
    <div class="dots"></div>
    <div class="tabs"><button class="tab on">Properties</button><button class="tab">Information</button></div>
    <div class="docktitle"><h2>Properties</h2><button aria-label="Float"><svg><use href="#i-float"/></svg></button><button aria-label="Close"><svg><use href="#i-close"/></svg></button></div>
    <div class="panel">
      <div class="actions">
        <button class="btn" disabled><svg viewBox="0 0 28 28"><path d="M2 9L8 7L15 10V24L9 27L2 23Z" fill="#c4c4c4" stroke="#aaa"/><path d="M8 12L15 10V24L9 27Z" fill="#ddd" stroke="#aaa"/><path d="M11 6L17 4L14 2L25 1L24 12L21 9L17 14V8Z" fill="#c4c4c4" stroke="#aaa"/></svg>Apply</button>
        <button class="btn" disabled><svg viewBox="0 0 28 28"><circle cx="14" cy="14" r="11.500" fill="none" stroke="#999" stroke-width="5"/><path d="M6 22L22 6" stroke="#999" stroke-width="5"/></svg>Reset</button>
        <button class="btn"><svg viewBox="0 0 28 28"><path d="M4 7L8 3L14 8L20 3L24 7L19 14L24 21L20 25L14 20L8 25L4 21L9 14Z" fill="#ed1c24" stroke="#a06050"/></svg>Delete</button>
        <button class="btn" aria-label="Help"><svg viewBox="0 0 28 28"><path d="M7 8Q8 1 15 1Q22 2 22 8Q22 12 17 16L16 21" fill="none" stroke="#6e8a5a" stroke-width="5"/><path d="M7 8Q8 1 15 1Q22 2 22 8Q22 12 17 16L16 20" fill="none" stroke="#a5d185" stroke-width="3"/><circle cx="15" cy="26" r="2.500" fill="#a5d185" stroke="#6e8a5a"/></svg></button>
      </div>
      <div class="search"><input aria-label="Search properties" placeholder="Search ... (use Esc to clear text)"><button class="gear" aria-label="Advanced"><svg viewBox="0 0 28 28"><path d="M11 1H17L18 5L22 3L26 8L23 12L27 14L26 19L22 19L22 25L17 24L16 27H11L10 24L5 25L5 19L1 18L2 13L5 12L2 8L6 3L10 5Z" fill="#ccc" stroke="#888" stroke-width="1.500"/><circle cx="14" cy="14" r="5" fill="#ddd" stroke="#888" stroke-width="1.500"/></svg></button></div>
      <div class="scrollarea">
        <form class="props">
          <div class="section top"><button type="button" class="sect"><i></i>Properties (PlotOverLine2)</button><button type="button" class="btn" aria-label="Copy"><svg><use href="#i-page"/></svg></button><button type="button" class="btn" disabled aria-label="Paste"><svg><use href="#i-paste"/></svg></button><button type="button" class="btn" aria-label="Reload"><svg><use href="#i-reload"/></svg></button><button type="button" class="btn" aria-label="Save"><svg><use href="#i-save"/></svg></button></div>
          <div class="line probe"><label for="probe">Probe Type</label><span class="combo"><select id="probe"><option>Line</option></select></span></div>
          <h3 class="head">Line Parameters</h3>
          <p class="len"><b>Length:</b> <i>5.19615</i></p>
          <label class="check"><input type="checkbox">Show Line</label>
          <div class="line pts"><label for="p1">Point1</label><input id="p1" value="0"><input value="0" aria-label="Point1 Y"><input value="0" aria-label="Point1 Z"></div>
          <div class="line pts"><label for="p2">Point2</label><input id="p2" value="5"><input value="1" aria-label="Point2 Y"><input value="1" aria-label="Point2 Z"></div>
          <p class="note">Note: Use 'P' to place alternating points on mesh or<br>'Ctrl+P' to snap to the closest mesh point. Use<br>'1'/'Ctrl+1' for point 1 and '2'/'Ctrl+2' for point 2.</p>
          <div class="axes"><button type="button" class="btn">X Axis</button><button type="button" class="btn">Y Axis</button><button type="button" class="btn">Z Axis</button></div>
          <button type="button" class="btn center">Center on Bounds</button>
          <div class="line res"><label for="res">Resolution</label><input id="res" value="1000"></div>
          <label class="check gap"><input type="checkbox" checked>Pass Partial Arrays</label>
          <label class="check gap"><input type="checkbox" checked>Compute Tolerance</label>
          <div class="section"><button type="button" class="sect"><i></i>Display (XYChartRepresentation)</button><button type="button" class="btn" aria-label="Copy"><svg><use href="#i-page"/></svg></button><button type="button" class="btn" disabled aria-label="Paste"><svg><use href="#i-paste"/></svg></button><button type="button" class="btn" aria-label="Reload"><svg><use href="#i-reload"/></svg></button><button type="button" class="btn" aria-label="Save"><svg><use href="#i-save"/></svg></button></div>
          <div class="line attr"><label for="attr">Attribute Type</label><span class="combo dot"><select id="attr"><option>Point Data</option></select></span></div>
          <h3 class="head last">X Axis Parameters</h3>
        </form>
        <div class="sbar"><button aria-label="Scroll up"></button><span class="thumb"></span><button class="dn" aria-label="Scroll down"></button></div>
      </div>
    </div>
  </aside>
  <div class="vdots"><i></i></div>

  <section class="views">
    <div class="tabs layout"><button class="tab on"><svg><use href="#i-max"/></svg>Layout #1<svg class="c"><use href="#i-close"/></svg></button><button class="tab">+</button></div>
    <div class="frames">
      <article class="frame active">
        <header>
          <button aria-label="Capture"><svg><use href="#i-cam"/></svg></button><i></i>
          <button aria-label="Add selection"><svg><use href="#i-selplus"/></svg></button><button aria-label="Subtract selection"><svg><use href="#i-selminus"/></svg></button><button aria-label="Toggle selection"><svg><use href="#i-seltog"/></svg></button><i></i>
          <button aria-label="More"><svg viewBox="0 0 20 20"><path d="M3 4L8 10L3 16M11 4L16 10L11 16" fill="none" stroke="#444" stroke-width="2"/></svg></button>
          <h2>Velocity (Orange) / Pressure (Red) when Re=500</h2>
          <button class="b" aria-label="Split horizontal"><svg><use href="#i-splith"/></svg></button><button class="b" aria-label="Split vertical"><svg><use href="#i-splitv"/></svg></button><button class="b m" aria-label="Maximize"><svg><use href="#i-max"/></svg></button><button class="b s" aria-label="Close view"><svg><use href="#i-close"/></svg></button>
        </header>
        <div class="pane">
        <svg class="chart" viewBox="855 406 941 1302">
          <g transform="translate(840 320) scale(.618622 .446429)">
            <path class="grid" d="M77 240H1508M77 368H1508M77 496H1508M77 624H1508M77 751H1508M77 879H1508M77 1007H1508M77 1135H1508M77 1262H1508M77 1390H1508M77 1518H1508"/>
            <path class="grid v" d="M203 300V1568M334 240V1568M463 240V1568M594 260V1568M725 240V1568M855 240V1568M985 250V1568M1116 240V1568M1245 240V1568M1376 260V1568M1507 240V1568"/>
            <path class="vel soft" d="M618 312H681M478 955V992M478 1207V1225M478 1261V1279M412 1458V1494M1035 1352H1060M885 563V580M614 562V580M548 660V687M1021 1136V1155M1022 1243V1279"/>
            <path class="vel" d="M683 276V254H712M714 254H718M819 276L820 309M821 318H827M833 318H840M847 318H855M616 312V383M616 419V455M615 473V562M614 598V628H595M582 628H569M548 634V670M547 741V777M485 782H491M480 796V813M480 849V885M480 921V955M479 1064V1066M479 1279V1343H412V1439M388 1555H394M885 419V490M886 490V526M885 544V563M905 646H912M915 646H917M925 646H952L954 741M954 777V798H957M1010 798H1020V813M1020 885V974M1020 992V1010M1020 1028V1064M1021 1064V1136M1021 1172V1207M1021 1279V1315M1060 1349H1089M1089 1387V1422M1089 1458V1512M1089 1530V1555H1112M1151 1555H1156V1566"/>
            <path class="axis" d="M77 383V401M77 490V526M77 562V598M77 634V670M77 679V706M77 777V813M77 885V903M77 956V992M77 1100V1136M77 1225V1315M77 1387V1422M77 1458V1494M77 1512V1568M69 496H77M69 1135H77M69 1262H77M69 1390H77M69 1518H77M41 358L46 356M42 366L40 372M58 500H61M65 492V496M52 886H55M58 886H61"/>
            <path class="axis" d="M1326 238H1331M1429 238H1447M1455 238H1461M1467 238H1487M1493 238H1500M1270 276V326H1371M1383 326H1391M1397 326H1423M1429 326H1474M1510 276V312"/>
            <path class="pre" d="M1277 262H1280M1293 262H1313"/><path class="vel" d="M1280 300H1313"/>
          </g>
          <g transform="translate(840 1000) scale(.618622 .478316)">
            <path class="grid" d="M160 115H750M1110 115H1480M77 234H1508M77 353H1508M84 472H1508M77 592H1508M77 712H1508M123 831H1508M103 950H1508M77 1069H1508M210 1188H1508M96 1308H1508"/>
            <path class="grid v" d="M203 190V1422M334 0V1422M463 0V1422M594 0V1422M725 0V1422M855 0V1422M985 0V1422M1116 0V1422M1245 0V1422M1376 0V1422M1507 0V1422"/>
            <path class="vel soft" d="M344 207V274M343 408V475M343 575V608M279 642V663M276 725V813M209 876V943M207 1110V1160M206 1210V1245M1294 943V976M1294 1177V1193"/>
            <path class="vel" d="M345 56V73M345 107V174M344 240V274M344 307V324M344 408V441M344 458V475M344 491V508M343 590V608M297 627H277V642M276 790V813H259M233 813H211L209 830V859M208 910V943M208 976V1043M208 1077V1110M208 1160V1177M208 1181V1184M208 1261V1273M162 1272H168M1156 56V73M1156 240V274M1157 374V475M1157 541V582H1164M1190 582H1197M1203 582H1216M1223 608V642M1224 675V715M1225 759V765H1254M1267 765H1292V776M1292 843V876M1292 893V909M1291 1027V1043M1292 1077V1110M1292 1210L1294 1230H1345M1360 1277V1343H1428"/>
            <path class="pre soft" d="M1170 1377H1216M1338 1411H1428"/>
            <path class="pre" d="M84 1182H136M142 1182H149M156 1182H181M226 1200H233M259 1200H285M310 1200H317M388 1222H407M480 1246H569M575 1246H582M588 1246H595M602 1246H608M621 1271H634M646 1271H653M718 1271H737M828 1297H847M860 1297H879M887 1297V1310M963 1324H970M976 1324H1022L1023 1343M1136 1351H1157L1159 1377H1164M1267 1378H1292L1294 1410H1320M1323 1410H1338"/>
            <path class="axis" d="M77 0V40M77 107V174M77 207V257M77 307V341M77 358V374M77 391V408M77 441V458M77 475V508M77 541V592M77 625V675M77 709V776M77 843V876M77 976V1092M77 1110V1144M77 1244V1277M77 1294V1344M69 115H77M69 234H77M69 592H77M66 712H77M69 1069H77M69 1308H77M40 942L45 938M43 1311H48M54 1311H56M62 1311H64"/>
            <path class="axis" d="M117 1422H310M323 1422H349M369 1422H375M394 1422H440M517 1422H543M563 1422H569M588 1422H744M757 1422H782M802 1422H1021M1034 1422H1067M1073 1422H1082M1086 1422H1112M1170 1422H1190M1197 1422H1229M1236 1422H1280M1287 1422H1510M203 1422V1432M334 1422V1432M725 1422V1432M855 1422V1432M985 1422V1432M1245 1422V1432M1376 1422V1432M1507 1422V1428"/>
          </g>
          <clipPath id="xl"><path d="M855 1684H1796V1693H855Z"/></clipPath>
          <g class="lab"><text x="882" y="431">2 2</text><text x="882" y="602">1.8</text><text x="872" y="659">1</text><text x="882" y="831">5</text><text x="882" y="887">1 4</text><text x="882" y="944">1.3</text><text x="882" y="1001">1 2</text><text x="882" y="1058">.1</text><text x="882" y="1115">1</text><text x="882" y="1172">0.9</text><text x="882" y="1229">0.8</text><text x="882" y="1286">.7</text><text x="882" y="1514">.3</text><text x="872" y="1572">0</text></g>
          <g class="lab mid" clip-path="url(#xl)"><text x="965" y="1695">0.5</text><text x="1047" y="1695">1</text><text x="1288" y="1695">2.5</text><text x="1370" y="1695">3</text><text x="1449" y="1695">3.5</text><text x="1612" y="1695">4.5</text><text x="1692" y="1695">5</text><text x="1778" y="1695">.5</text></g>
          <path class="axis" d="M1130 1692Q1133 1695 1136 1692M1530 1689H1532"/>
          <g class="leg"><text x="1655" y="441">pressure</text><text x="1656" y="458">velocity_magnitude</text></g>
          <path fill="#fff" d="M864 429H872V432H864ZM870 598H884V603H870ZM872 829H884V832H872ZM865 1220H876V1225H865ZM1662 435H1680V446H1662ZM1688 430H1710V446H1688ZM1662 446H1689V462H1662ZM1693 446H1726V460H1693ZM1730 446H1749V457H1730ZM1738 452H1749V463H1738ZM1701 459H1724V462H1701Z"/>
        </svg>
        </div>
      </article>
      <article class="frame">
        <header>
          <button aria-label="Capture"><svg><use href="#i-cam"/></svg></button><i></i>
          <button aria-label="Add selection"><svg><use href="#i-selplus"/></svg></button><button aria-label="Subtract selection"><svg><use href="#i-selminus"/></svg></button><button aria-label="Toggle selection"><svg><use href="#i-seltog"/></svg></button><i></i>
          <button aria-label="Select points"><svg><use href="#i-selpts"/></svg></button><button aria-label="Select box"><svg><use href="#i-selbox"/></svg></button>
          <h2>Velocity (Orange) / Pressure (Red) when Re=100</h2>
          <button class="b" aria-label="Split horizontal"><svg><use href="#i-splith"/></svg></button><button class="b" aria-label="Split vertical"><svg><use href="#i-splitv"/></svg></button><button class="b m" aria-label="Maximize"><svg><use href="#i-max"/></svg></button><button class="b s" aria-label="Close view"><svg><use href="#i-close"/></svg></button>
        </header>
        <div class="pane">
        <svg class="chart" viewBox="1804 407 938 1300">
          <g transform="translate(1790 320) scale(.610969 .446429)">
            <path class="grid" d="M74 256H1524M74 377H1524M74 498H1524M74 621H1524M74 742H1524M74 866H1524M74 987H1524M74 1108H1524M74 1231H1524M74 1352H1524M74 1473H1524"/>
            <path class="grid v" d="M215 240V1568M358 240V1568M502 240V1568M645 350V1568M787 270V1568M932 240V1568M1074 350V1568M1217 350V1568M1361 360V1568M1503 360V1568"/>
            <path class="vel soft" d="M593 916V939M594 992V1010M966 813V849M965 955H992M518 1136V1172"/>
            <path class="vel" d="M742 633V594H809M671 643H730M817 598L818 615H835M861 615H881M887 615H890L891 663H964V741M667 741V795M667 813V885M612 916H625M594 939V955M594 1010L592 1054H573M527 1054H534M518 1136V1150M518 1351V1387M518 1422V1458M518 1494V1530M455 1554H494M965 921V955M1018 957H1038L1039 1028M1039 1064L1041 1083H1044M1070 1083H1097M1113 1100V1172M1113 1189V1243M1113 1315V1369M1114 1387V1404M1114 1422V1494M1114 1530V1539M1136 1532H1142M1149 1532H1155M1162 1532H1168M1175 1532H1182"/>
            <path class="axis" d="M74 276V293M74 311V347M74 383V419M74 432V455M74 490V562M74 813V921M74 1082V1100M74 1387V1440M74 1494V1530M66 498H74M68 866H74M54 258H56M54 383H56M58 383H62M39 491L43 488L46 491M62 494V503M66 498H70M60 854V857M40 1097H45M41 1340H43M51 1353L54 1358M54 1473H56M54 988H56"/>
            <path class="axis" d="M1300 238H1311M1319 238H1333M1358 238H1371M1384 238H1398M1444 238H1449M1457 238H1463M1281 240V312M1524 240V326H1424M1306 326H1339M1345 326H1352M1384 326H1391"/>
            <path class="pre" d="M1288 262H1300M1313 262H1320"/><path class="vel" d="M1290 300H1306"/>
          </g>
          <g transform="translate(1790 1000) scale(.610969 .478316)">
            <path class="grid" d="M153 69H1430M74 182H1524M100 297H1516M84 410H1508M74 523H1508M84 638H1500M250 751H1460M430 863H1524M74 979H1508M74 1092H1508M74 1206H1524M74 1320H1508"/>
            <path class="grid v" d="M215 0V1411M358 0V1422M502 0V1422M645 0V1422M787 0V1422M932 0V1422M1074 0V1422M1217 0V1290M1361 0V1411M1503 107V1422"/>
            <path class="vel soft" d="M1188 40V123M1410 843V876M371 240V274M296 759V876M370 558V592M1410 1110V1277M173 1389H181M1485 1330V1422"/>
            <path class="vel" d="M518 0V6M1187 60V107M1254 168H1260V174M1261 190V207M1262 240V307M1262 374V458M1262 508V541M1262 592V664M1263 677V661H1286M1293 661H1300M1326 661H1335V709M1336 725V742M1337 759V843H1346M1352 844H1404M1410 876V943M1410 960V1043M1410 1077V1177M1411 1180V1210M1411 1277V1310M1468 1322H1484L1485 1422M444 140V207M409 206H416M383 208H371V240M371 257V274M370 374V424M371 441V475M370 508V541M370 575V659M370 709V742M363 759H343M337 759H296V830M291 933H285M259 933H246M232 933H223L222 1010M222 1043V1110M221 1244V1311M179 1391H193"/>
            <path class="pre soft" d="M232 308H239M259 308H285M521 475V491M1410 1315V1378M373 374V424"/>
            <path class="pre" d="M74 192H121M124 192H136M142 192H147M153 192H175M178 192H187M223 274V291M311 306H318M337 306H363M375 440H429M435 441H442M448 440H455M462 440H494M507 440H514M520 508V541M521 558V575M547 582H553M606 582H612M651 582H668V625M670 725V729H691M697 729H704M782 729H802M809 729H816V742M818 792V809M818 824V826M822 877H861M867 875H894M900 876H953M966 876V976M1031 1021H1114V1077M1115 1110V1167M1156 1167H1254M1263 1210V1227M1264 1244V1315H1280M1385 1315H1410M1412 1411V1422"/>
            <path class="axis" d="M74 123V140M74 157V207M74 274V341M74 374V408M74 441V475M74 508V541M74 575V608M74 675V692M74 709V742M74 776V809M74 876V1010M74 1043V1144M74 1210V1265M74 1277V1294M74 1310V1378M74 1393V1411M66 182H74M66 297H74M66 523H74M66 979H74M66 1092H74M66 1320H74M43 643H46M39 742L44 740L48 743M54 742H56M39 860H41M45 860H47M62 860H64M40 172H45M39 526H42M54 1210H61"/>
            <path class="axis" d="M74 1422H128M173 1422H180M232 1422H239M245 1422H252M324 1422H337M350 1422H376M390 1422H416M422 1422H540M566 1422H573M756 1422H795M802 1422H1018M1030 1422H1097M1123 1422H1129M1136 1422H1151M1162 1422H1179M1188 1422H1201M1254 1422H1280M1300 1422H1306M1339 1422H1345M1411 1422H1437M1443 1422H1522M358 1422V1432M502 1422V1432M932 1422V1432M1074 1422V1432M1503 1422V1432M205 1446V1452M782 1450H784M787 1450H789M1351 1439H1355M1364 1439H1366"/>
          </g>
          <clipPath id="xr"><path d="M1804 1684H2741V1693H1804Z"/></clipPath>
          <g class="lab"><text x="1820" y="437">2</text><text x="1820" y="491">2</text><text x="1829" y="763">8</text><text x="1820" y="1035">1</text><text x="1830" y="1090">2</text><text x="1830" y="1145">1.1</text><text x="1830" y="1197">1</text><text x="1830" y="1252">.9</text><text x="1830" y="1471">0.5</text><text x="1830" y="1526">0 4</text><text x="1823" y="1580">0.</text><text x="1830" y="1634">0 2</text></g>
          <g class="lab mid"><text x="2009" y="1695">1</text></g>
          <g class="lab mid" clip-path="url(#xr)"><text x="2099" y="1695">1.5</text><text x="2360" y="1695">3</text><text x="2446" y="1695">3.5</text><text x="2708" y="1695">5</text></g>
          <g class="leg"><text x="2602" y="441">pressure</text><text x="2603" y="458">velocity_magnitude</text></g>
          <path fill="#fff" d="M2609 435H2612V446H2609ZM2620 430H2627V446H2620ZM2634 430H2637V437H2634ZM2619 446H2625V462H2619ZM2648 446H2668V464H2648ZM2681 446H2684V464H2681ZM2690 446H2701V464H2690ZM1824 1625H1831V1630H1824Z"/>
        </svg>
        </div>
      </article>
    </div>
  </section>
</main>

<footer class="status">
  <p>Rescale to data range over all timesteps</p>
  <div class="prog"><button aria-label="Abort"><svg viewBox="0 0 12 12"><path d="M2 2L10 10M10 2L2 10" stroke="#888" stroke-width="4"/></svg></button><span></span></div>
</footer>
</div>
</body>
</html>
```

FILE: styles.css
```css
* { box-sizing: border-box; margin: 0; }
html, body { height: 100%; }
body { font: 24px/28px "DejaVu Sans", Verdana, sans-serif; color: #000; background: #efefef; }
button, input, select { font: inherit; color: inherit; padding: 0; border: 0; background: none; border-radius: 0; }
h1, h2, h3 { font: inherit; }
svg { display: block; }
.defs { display: none; }

.app { height: 100vh; display: flex; flex-direction: column; background: #efefef; border: 2px solid #2b2b2b; border-top: 0; overflow: hidden; }

.titlebar { flex: none; height: 76px; margin: 0 -2px; position: relative; display: flex; align-items: center; justify-content: center; background: #222; border-top: 4px solid #303030; border-bottom: 2px solid #161216; color: #fff; }
.titlebar h1 { font: bold 28px/34px "Noto Sans", sans-serif; }
.winbtns { position: absolute; right: 20px; top: 0; height: 68px; display: flex; align-items: center; gap: 32px; }
.winbtns button { width: 36px; height: 36px; display: grid; place-items: center; border-radius: 50%; }
.winbtns svg { width: 16px; height: 16px; }
.winbtns .x { background: #e04a17; }

.menubar { flex: none; display: flex; height: 34px; align-items: center; padding: 0 6px; border-bottom: 1px solid #cfcfcf; }
.menubar a { padding: 0 11px 0 10px; color: #000; text-decoration: none; }
.menubar u { text-underline-offset: 3px; }

.toolbar { flex: none; display: flex; gap: 9px; height: 71px; background: linear-gradient(#fafafa, #eee); border-bottom: 1px solid #b4b4b4; }
.toolbar.filters { height: 70px; }
.group { display: flex; align-items: center; }
.grip { width: 26px; height: 18px; background: radial-gradient(circle, #c4c4c4 1px, transparent 1px) 10px 0 / 4px 4px repeat-y, radial-gradient(circle, #c4c4c4 1px, transparent 1px) 14px 2px / 4px 4px repeat-y; }
.group > button { width: 56px; height: 54px; display: grid; place-items: center; border: 1px solid transparent; border-radius: 3px; }
.group > button > svg { width: 48px; height: 48px; }
.group > button.down { background: #dadada; border-color: #bdbdbd; }
.filters .group > button { width: 58px; }
.filters .grip { width: 24px; }
.sep { width: 12px; height: 44px; background: linear-gradient(#ccc, #ccc) 6px 0 / 1px 100% no-repeat; }
.go { fill: #a5d185; stroke: #6e6e50; stroke-width: 1.8; }
.sub { font: italic bold 26px "DejaVu Sans", sans-serif; fill: #777; }
.ax { font: bold 18px "Open Sans", sans-serif; fill: #a0a0a0; }
.ax.sm { font-size: 16px; }

.combo { position: relative; display: flex; height: 38px; border: 1px solid #b0b0b0; border-radius: 3px; background: linear-gradient(#fefefe, #ececec); }
.combo select { appearance: none; width: 100%; height: 36px; padding: 0 4px; }
.combo::after { content: ""; position: absolute; right: 13px; top: 13px; width: 16px; height: 10px; background: #555; clip-path: polygon(0 0, 100% 0, 50% 100%); pointer-events: none; }
.combo.off { border-color: #ccc; background: linear-gradient(#fafafa, #f0f0f0); color: #bebebe; }
.combo.off select { opacity: 1; color: #bebebe; }
.combo.off::after { background: #c4c4c4; }
.combo.t { width: 86px; margin-left: 1px; }
.combo.c1 { width: 149px; margin-right: 5px; }
.combo.c2 { width: 141px; }
.combo.c3 { width: 225px; }
.combo.c3 select { width: 186px; overflow: hidden; }
.spin { display: flex; width: 88px; height: 44px; margin: 0 2px; border: 1px solid #b0b0b0; border-radius: 3px; background: #fff; }
.spin input { width: 58px; height: 42px; padding: 0 4px; }
.arrows { flex: 1; display: flex; flex-direction: column; border-left: 1px solid #c4c4c4; background: #f3f3f3; }
.arrows button { flex: 1; display: grid; place-items: center; }
.arrows button::before, .sbar button::before { content: ""; width: 15px; height: 9px; background: #555; clip-path: polygon(0 100%, 100% 100%, 50% 0); }
.arrows .dn::before, .sbar .dn::before { clip-path: polygon(0 0, 100% 0, 50% 100%); }

.work { flex: 1; min-height: 0; display: flex; }
.dock { width: 838px; display: flex; flex-direction: column; padding-bottom: 18px; }
.docktitle { flex: none; display: flex; align-items: center; gap: 4px; height: 34px; padding: 0 3px; }
.docktitle h2 { flex: 1; }
.docktitle svg { width: 12px; height: 12px; }

.tree { flex: none; list-style: none; height: 406px; margin: 0 1px; padding: 2px 0; background: #fff; border: 1px solid #b0b0b0; }
.tree li { display: flex; height: 38px; }
.eye { width: 52px; display: flex; align-items: center; padding-left: 6px; }
.eye svg { width: 24px; height: 20px; }
.sel .eye { padding-left: 3px; }
.sel .eye svg { width: 30px; }
.branch { width: 35px; position: relative; }
.branch.first, .branch.line { background: linear-gradient(#888, #888) 18px 0 / 1px 100% no-repeat; }
.branch.last { background: linear-gradient(#888, #888) 18px 0 / 1px 50% no-repeat; }
.branch.first::after, .branch.last::after { content: ""; position: absolute; left: 14px; top: 15px; width: 9px; height: 9px; border: 1px solid #888; background: linear-gradient(#000, #000) center / 5px 1px no-repeat #fff; }
.branch.first::before, .branch.last::before { content: ""; position: absolute; left: 23px; top: 19px; width: 11px; height: 1px; background: #888; }
.row { display: flex; align-items: center; }
.row svg { width: 16px; height: 16px; margin: 0 19px 16px 0; }
.root .row { padding-left: 5px; }
.root .row svg { width: 8px; height: 14px; margin: 0 23px 14px 0; }
.sel .row { height: 34px; margin-top: 2px; padding-right: 4px; color: #fff; background: linear-gradient(#3292d0, #2d87c0); }
.sel .branch { height: 34px; margin-top: 2px; background: linear-gradient(#3292d0, #2d87c0); }

.dots { flex: none; height: 12px; background: linear-gradient(90deg, #bbb 1px, transparent 1px) center 5px / 3px 1px repeat-x; clip-path: inset(0 411px); }
.vdots { width: 11px; display: grid; place-items: center; }
.vdots i { width: 1px; height: 18px; background: linear-gradient(#bbb 1px, transparent 1px) 0 0 / 1px 3px repeat-y; }

.tabs { flex: none; display: flex; align-items: flex-end; height: 52px; margin: 0 1px; background: linear-gradient(#b4b4b4, #b4b4b4) 0 49px / 100% 1px no-repeat; }
.tab { height: 50px; padding: 0 24px 0 22px; border: 1px solid #b4b4b4; border-left: 0; border-bottom: 0; background: linear-gradient(#dedede 80%, #d4d4d4); border-radius: 3px 3px 0 0; }
.tab.on { height: 52px; padding: 0 27px 2px 22px; border-left: 1px solid #b4b4b4; background: linear-gradient(#fcfcfc, #efefef); }

.panel { flex: 1; min-height: 0; display: flex; flex-direction: column; gap: 12px; padding: 18px 19px 0 18px; }
.btn { display: flex; align-items: center; justify-content: center; height: 44px; border: 1px solid #b0b0b0; border-radius: 3px; background: linear-gradient(#fefefe, #ebebeb); }
.btn:disabled { color: #bebebe; border-color: #c8c8c8; }
.actions { flex: none; display: grid; grid-template-columns: repeat(4, 1fr); gap: 2px; }
.actions svg { width: 28px; height: 28px; margin-right: 2px; }
.search { flex: none; display: flex; gap: 2px; }
.search input { flex: 1; height: 39px; padding: 0 3px; background: #fff; border: 1px solid #b0b0b0; border-radius: 3px; }
.search input::placeholder { color: #808080; opacity: 1; }
.gear { width: 40px; height: 39px; display: grid; place-items: center; background: #dcdcdc; border: 1px solid #b8b8b8; border-radius: 3px; }
.gear svg { width: 28px; height: 28px; }

.scrollarea { flex: 1; min-height: 0; display: flex; overflow: hidden; }
.props { flex: 1; min-width: 0; }
.section { display: grid; grid-template-columns: 1fr repeat(4, 50px); gap: 4px; margin-top: 15px; }
.section.top { margin-top: -34px; }
.section svg { width: 34px; height: 34px; }
.sect { display: flex; align-items: center; gap: 13px; height: 44px; padding-left: 20px; border: 1px solid #b8b8b8; font-weight: bold; }
.sect i { width: 13px; height: 4px; background: #2a95d3; }
.line { display: flex; }
.line input { min-width: 0; height: 38px; padding: 0 3px; background: #fff; border: 1px solid #b0b0b0; border-radius: 3px; }
.probe { margin-top: 12px; align-items: center; }
.probe .combo { flex: 1; margin-left: 9px; }
.head { font-weight: bold; margin-top: 8px; height: 30px; border-bottom: 1px solid #9a9a9a; }
.len { margin-top: 6px; }
.check { display: flex; align-items: center; gap: 11px; height: 28px; margin-top: 6px; }
.check.gap { margin-top: 11px; }
.check input { appearance: none; flex: none; width: 28px; height: 28px; background: #fff; border: 1px solid #b8b8b8; }
.check input:checked::before { content: ""; display: block; width: 18px; height: 21px; margin: 3px 4px; background: #000; clip-path: polygon(0 45%, 16% 40%, 34% 68%, 85% 0, 100% 5%, 48% 97%, 32% 100%); }
.pts { display: grid; grid-template-columns: 76px 1fr 1fr 1fr; column-gap: 2px; margin-top: 2px; align-items: center; }
.check + .pts { margin-top: 6px; }
.note { font-weight: bold; margin: 2px 0; white-space: nowrap; }
.axes { display: grid; grid-template-columns: repeat(3, 1fr); gap: 2px; }
.center { width: 100%; margin-top: 1px; }
.res { margin-top: 3px; padding: 10px 0 3px; border-top: 1px solid #9a9a9a; border-bottom: 1px solid #9a9a9a; }
.res input { flex: 1; margin-left: 6px; }
.res + .check { margin-top: 10px; }
.attr { margin-top: 16px; justify-content: space-between; }
.attr .combo { width: 546px; height: 41px; }
.attr .combo select { height: 39px; padding-left: 39px; }
.dot::before { content: ""; position: absolute; left: 16px; top: 15px; width: 9px; height: 9px; border-radius: 50%; background: #fbb917; border: 1px solid #777; }
.head.last { border: 0; margin-top: 6px; height: 28px; }
.sbar { width: 28px; display: flex; flex-direction: column; background: #e4e4e4; border-left: 1px solid #b8b8b8; }
.sbar button { height: 28px; display: grid; place-items: center; background: #fbfbfb; border-bottom: 1px solid #b0b0b0; }
.sbar .dn { margin-top: auto; border-bottom: 0; border-top: 1px solid #b0b0b0; }
.thumb { height: 78px; margin-top: 3px; background: linear-gradient(90deg, #fefefe, #efefef); border: 1px solid #b0b0b0; border-width: 1px 0; }

.views { flex: 1; min-width: 0; display: flex; flex-direction: column; padding: 2px 2px 2px 0; }
.tabs.layout { height: 50px; margin: 0; background-position: 0 48px; }
.layout .tab { padding: 0 24px; }
.layout .tab.on { display: flex; align-items: center; gap: 4px; height: 50px; padding: 0 24px 0 22px; background: linear-gradient(#fff, #f8f8f8); }
.layout svg { width: 17px; height: 17px; }
.layout svg.c { width: 12px; height: 12px; }
.frames { flex: 1; min-height: 0; display: grid; grid-template-columns: 1fr 1fr; gap: 3px; padding-left: 2px; }
.frame { min-width: 0; display: flex; flex-direction: column; }
.frame header { flex: none; height: 30px; display: flex; align-items: center; gap: 2px; padding: 0 1px; }
.frame header i { width: 1px; height: 18px; margin: 0 5px; background: #ccc; }
.frame header button { flex: none; width: 24px; display: grid; place-items: center; }
.frame header svg { width: 18px; height: 18px; }
.frame h2 { flex: 1; text-align: right; margin-right: 9px; white-space: nowrap; }
.active h2 { font-weight: bold; text-decoration: underline; text-underline-offset: 3px; }
.frame header .b { width: 25px; height: 25px; border: 1px solid #b0b0b0; border-radius: 3px; background: linear-gradient(#fefefe, #ebebeb); }
.frame header .b svg { width: 15px; height: 15px; }
.frame header .m svg { width: 18px; height: 18px; }
.frame header .s svg { width: 12px; height: 12px; }
.pane { flex: 1; min-height: 0; border: 3px solid #efefef; background: #fff; }
.active .pane { border: 2px solid #00f; }
.chart { width: 100%; height: 100%; background: #fff; }
.chart path { fill: none; vector-effect: non-scaling-stroke; }
.chart path[fill="#fff"] { fill: #fff; }
.chart clipPath path { fill: #000; }
.chart .grid, .chart .axis { shape-rendering: crispEdges; }
.grid { stroke: #f2f2f2; stroke-width: 1; stroke-dasharray: 22 9 5 14 30 6 3 20 12 34; }
.grid.v { stroke-dasharray: 30 18 12 40 22 9 46 14; }
.vel { stroke: #ff7f0e; stroke-width: 2; }
.pre { stroke: #e31a1c; stroke-width: 2; }
.soft { stroke-width: 1; opacity: .5; }
.axis { stroke: #000; stroke-width: 1; }
.lab { font: 13px "Liberation Sans", Arial, sans-serif; text-anchor: end; fill: #111; }
.lab.mid { text-anchor: middle; }
.leg { font: 13px "Liberation Sans", Arial, sans-serif; fill: #111; }

.status { flex: none; display: flex; align-items: center; height: 36px; padding: 0 2px 0 6px; }
.status p { flex: 1; }
.prog { flex: 1; display: flex; align-items: center; gap: 2px; }
.prog button { width: 20px; height: 20px; display: grid; place-items: center; border: 1px solid #c0c0c0; border-radius: 3px; background: #f6f6f6; }
.prog svg { width: 10px; height: 10px; }
.prog span { flex: 1; height: 30px; border: 1px solid #b0b0b0; border-right-color: #ddd; }
```
